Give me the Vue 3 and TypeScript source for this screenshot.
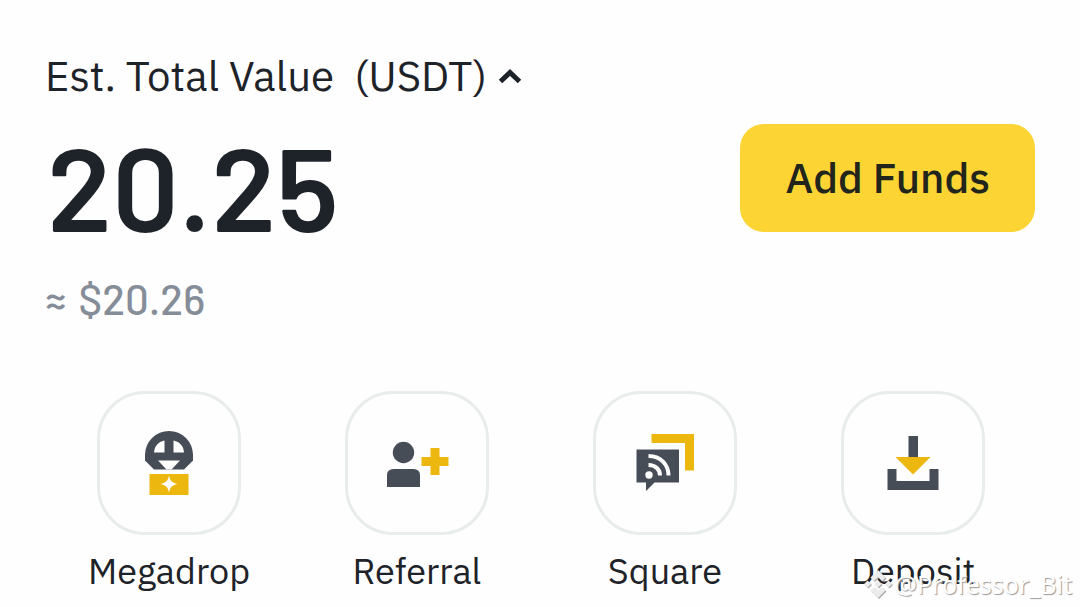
<script setup lang="ts">
import { ref } from 'vue'

type IconName = 'megadrop' | 'referral' | 'square' | 'deposit'

interface Action {
  label: string
  icon: IconName
}

const actions: Action[] = [
  { label: 'Megadrop', icon: 'megadrop' },
  { label: 'Referral', icon: 'referral' },
  { label: 'Square', icon: 'square' },
  { label: 'Deposit', icon: 'deposit' },
]

const expanded = ref(true)
</script>

<template>
  <main class="wallet">
    <section class="summary">
      <div class="balance">
        <button class="heading" type="button" :aria-expanded="expanded" @click="expanded = !expanded">
          <span>Est. Total Value</span>
          <span class="unit">(USDT)</span>
          <svg class="chevron" viewBox="0 0 24 16" aria-hidden="true">
            <path d="M2.500 13.500 12 4.500l9.500 9" fill="none" stroke="currentColor" stroke-width="5" />
          </svg>
        </button>
        <p class="amount">20.25</p>
        <p class="fiat"><span>≈</span><span>$20.26</span></p>
      </div>
      <button class="add" type="button">Add Funds</button>
    </section>

    <nav class="actions" aria-label="Shortcuts">
      <a v-for="action in actions" :key="action.label" class="action" href="#">
        <span class="tile">
          <svg class="icon" viewBox="0 0 72 72" aria-hidden="true">
            <g v-if="action.icon === 'megadrop'">
              <path class="dark" d="M12 28A24 24 0 0 1 60 28V33.500L51 42.500H21L12 33.500Z" />
              <path class="blank" d="M31.500 13.500V25.500H21C21.500 19 25 15 31.500 13.500ZM40.500 13.500V25.500H51C50.500 19 47 15 40.500 13.500Z" />
              <path class="blank" d="M25 33.500H47L38.500 42.500H33.500Z" />
              <path class="gold" d="M16.500 47h39V68h-39Z" />
              <path class="blank" d="M36 48.500c1.300 5.500 2.700 7 8.500 8.500-5.800 1.500-7.200 3-8.500 8.500-1.300-5.500-2.700-7-8.500-8.500 5.800-1.500 7.200-3 8.500-8.500Z" />
            </g>
            <g v-else-if="action.icon === 'referral'">
              <circle class="dark" cx="22.500" cy="25.500" r="10.700" />
              <path class="dark" d="M6 60V48.500q0-6.500 6.500-6.500H32.500q6.500 0 6.500 6.500V60Z" />
              <path class="gold" d="M49.500 21h9v9h9v9h-9v9h-9v-9h-9v-9h9Z" />
            </g>
            <g v-else-if="action.icon === 'square'">
              <path class="gold" d="M22.500 7H65V43.500h-9V16H22.500Z" />
              <path class="dark" d="M7.500 22.500H50v33H25.500L17 64V55.500H7.500Z" />
              <circle class="blank" cx="20" cy="48" r="3.700" />
              <path class="wave" d="M19.500 38C26.500 38 31 42.500 31 48.500M19.500 29C31.500 29 39.500 37.500 39.500 48.500" />
            </g>
            <g v-else>
              <path class="dark" d="M31.500 9h9.500V31h-9.500ZM10.500 42h9v12h33v-12h9v21h-51Z" />
              <path class="gold" d="M18.500 30h35L36 47.500Z" />
            </g>
          </svg>
        </span>
        <span class="label">{{ action.label }}</span>
      </a>
    </nav>

    <div class="watermark">
      <svg class="mark" viewBox="0 0 30 30" aria-hidden="true">
        <path d="M15 1 22.500 8.500 19 12l-4-4-4 4-3.500-3.500ZM4.500 11.500 8 15l-3.500 3.500L1 15ZM15 11.500l3.500 3.500-3.500 3.500-3.500-3.500ZM25.500 11.500 29 15l-3.500 3.500L22 15ZM7.500 21.500 11 18l4 4 4-4 3.500 3.500L15 29Z" />
      </svg>
      <span>@Professor_Bit</span>
    </div>
  </main>
</template>

<style>
body {
  margin: 0;
  background: #fefefe;
}
</style>

<style scoped>
.wallet {
  position: relative;
  box-sizing: border-box;
  min-height: 100vh;
  padding: 51px 45px 12px;
  overflow: hidden;
  color: #1e2329;
  font-family: "IBM Plex Sans", Roboto, "Noto Sans", sans-serif;
}

.summary {
  display: flex;
  align-items: flex-start;
  justify-content: space-between;
}

.balance {
  display: flex;
  flex-direction: column;
  align-items: flex-start;
}

.heading {
  display: flex;
  align-items: center;
  padding: 0;
  border: 0;
  background: none;
  color: inherit;
  font: inherit;
  font-size: 42px;
  line-height: 50px;
}

.unit {
  margin-left: 20px;
}

.chevron {
  width: 24px;
  height: 16px;
  margin-left: 11px;
}

.amount {
  margin: 16px 0 0;
  padding-left: 2px;
  font-family: Barlow, Roboto, sans-serif;
  font-size: 118px;
  font-weight: 600;
  line-height: 136px;
}

.fiat {
  display: flex;
  gap: 12px;
  margin: 20px 0 0;
  color: #858d98;
  font-family: Barlow, Roboto, sans-serif;
  font-size: 42px;
  font-weight: 500;
  line-height: 50px;
}

.add {
  margin-top: 73px;
  padding: 0 45px;
  border: 0;
  border-radius: 24px;
  background: #fcd535;
  color: #22251c;
  font: inherit;
  font-size: 42px;
  font-weight: 500;
  line-height: 108px;
}

.actions {
  display: grid;
  grid-template-columns: repeat(4, 1fr);
  margin: 68px -2px 0 0;
}

.action {
  display: flex;
  flex-direction: column;
  align-items: center;
  color: inherit;
  text-decoration: none;
}

.tile {
  display: grid;
  box-sizing: border-box;
  width: 144px;
  height: 144px;
  place-items: center;
  border: 3px solid #e9ecec;
  border-radius: 48px;
}

.icon {
  width: 72px;
  height: 72px;
}

.dark {
  fill: #474d57;
}

.gold {
  fill: #ecb70f;
}

.blank {
  fill: #fefefe;
}

.wave {
  fill: none;
  stroke: #fefefe;
  stroke-width: 4;
}

.label {
  margin-top: 14px;
  font-size: 36px;
  line-height: 44px;
}

.watermark {
  position: absolute;
  right: 8px;
  bottom: 6px;
  display: flex;
  align-items: center;
  gap: 2px;
  color: #fefefe;
  font-family: "Noto Sans", sans-serif;
  font-size: 25px;
  line-height: 34px;
  text-shadow: 1px 1px 1px #999;
}

.mark {
  width: 30px;
  height: 30px;
  fill: #ececec;
  filter: drop-shadow(1px 1px 0 #aaa);
}
</style>
